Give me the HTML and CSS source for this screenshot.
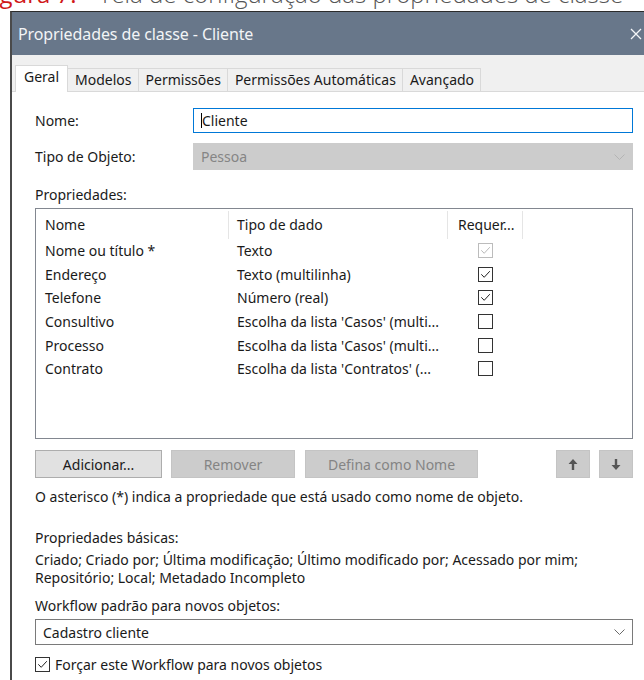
FILE: index.html
```html
<!DOCTYPE html>
<html lang="pt">
<head>
<meta charset="utf-8">
<title>Propriedades de classe - Cliente</title>
<link rel="stylesheet" href="styles.css">
</head>
<body>
<div class="caption"><div class="caption-line"><span class="fig">Figura 7:</span> <span class="cap-text">Tela de configuração das propriedades de classe</span></div></div>

<div class="dialog">
  <div class="titlebar">
    <span class="title">Propriedades de classe - Cliente</span>
    <svg class="close" width="12" height="12" viewBox="0 0 12 12"><path d="M1 1L11 11M11 1L1 11" stroke="#f4f6f8" stroke-width="1.3" fill="none"/></svg>
  </div>

  <div class="tabs">
    <div class="tab active">Geral</div>
    <div class="tab">Modelos</div>
    <div class="tab">Permissões</div>
    <div class="tab">Permissões Automáticas</div>
    <div class="tab">Avançado</div>
  </div>

  <div class="panel">
    <div class="field-row">
      <label class="label">Nome:</label>
      <div class="input focused"><span class="caret"></span>Cliente</div>
    </div>
    <div class="field-row">
      <label class="label">Tipo de Objeto:</label>
      <div class="select disabled">
        <span>Pessoa</span>
        <svg class="chev" width="11" height="6" viewBox="0 0 11 6"><path d="M0.5 0.5L5.5 5.5L10.5 0.5" stroke="#b4b4b4" fill="none"/></svg>
      </div>
    </div>

    <div class="section-label">Propriedades:</div>
    <div class="listbox">
      <div class="list-head">
        <div class="col c1">Nome</div>
        <div class="col c2">Tipo de dado</div>
        <div class="col c3">Requer...</div>
      </div>
      <div class="list-row">
        <div class="col c1">Nome ou título *</div>
        <div class="col c2">Texto</div>
        <div class="col c3"><span class="check checked dim"><svg viewBox="0 0 13 13"><path d="M2.3 6.3L5.2 9.3L10.8 3.2" stroke="#b9b9b9" stroke-width="1" fill="none"/></svg></span></div>
      </div>
      <div class="list-row">
        <div class="col c1">Endereço</div>
        <div class="col c2">Texto (multilinha)</div>
        <div class="col c3"><span class="check checked"><svg viewBox="0 0 13 13"><path d="M2.3 6.3L5.2 9.3L10.8 3.2" stroke="#222" stroke-width="1" fill="none"/></svg></span></div>
      </div>
      <div class="list-row">
        <div class="col c1">Telefone</div>
        <div class="col c2">Número (real)</div>
        <div class="col c3"><span class="check checked"><svg viewBox="0 0 13 13"><path d="M2.3 6.3L5.2 9.3L10.8 3.2" stroke="#222" stroke-width="1" fill="none"/></svg></span></div>
      </div>
      <div class="list-row">
        <div class="col c1">Consultivo</div>
        <div class="col c2">Escolha da lista 'Casos' (multi...</div>
        <div class="col c3"><span class="check"></span></div>
      </div>
      <div class="list-row">
        <div class="col c1">Processo</div>
        <div class="col c2">Escolha da lista 'Casos' (multi...</div>
        <div class="col c3"><span class="check"></span></div>
      </div>
      <div class="list-row">
        <div class="col c1">Contrato</div>
        <div class="col c2">Escolha da lista 'Contratos' (...</div>
        <div class="col c3"><span class="check"></span></div>
      </div>
    </div>

    <div class="button-row">
      <button class="btn b-add">Adicionar...</button>
      <button class="btn b-rem" disabled>Remover</button>
      <button class="btn b-name" disabled>Defina como Nome</button>
      <span class="spacer"></span>
      <button class="btn b-arrow" disabled><svg width="10" height="13" viewBox="0 0 10 13"><path d="M5 1L9.5 6H6.2V12H3.8V6H0.5Z" fill="#555"/></svg></button>
      <button class="btn b-arrow" disabled><svg width="10" height="13" viewBox="0 0 10 13"><path d="M5 12L9.5 7H6.2V1H3.8V7H0.5Z" fill="#555"/></svg></button>
    </div>

    <p class="note">O asterisco (*) indica a propriedade que está usado como nome de objeto.</p>

    <div class="basic-label">Propriedades básicas:</div>
    <p class="basic-list">Criado; Criado por; Última modificação; Último modificado por; Acessado por mim;<br>Repositório; Local; Metadado Incompleto</p>

    <div class="wf-label">Workflow padrão para novos objetos:</div>
    <div class="select wf">
      <span>Cadastro cliente</span>
      <svg class="chev" width="11" height="6" viewBox="0 0 11 6"><path d="M0.5 0.5L5.5 5.5L10.5 0.5" stroke="#6a6a6a" fill="none"/></svg>
    </div>

    <div class="force-row">
      <span class="check checked"><svg viewBox="0 0 13 13"><path d="M2.3 6.3L5.2 9.3L10.8 3.2" stroke="#222" stroke-width="1" fill="none"/></svg></span>
      <span>Forçar este Workflow para novos objetos</span>
    </div>
  </div>
</div>
</body>
</html>
```

FILE: styles.css
```css
html, body {
  margin: 0;
  padding: 0;
  background: #ffffff;
}

body {
  width: 644px;
  height: 680px;
  overflow: hidden;
  font-family: "Noto Sans", "Open Sans", sans-serif;
  font-size: 14px;
  color: #1a1a1a;
}

/* figure caption above the dialog; only its lower edge stays in view */
.caption {
  height: 11px;
  overflow: hidden;
}

.caption-line {
  margin-top: -18px;
  margin-left: -19px;
  white-space: nowrap;
  font-family: "Open Sans", sans-serif;
  font-weight: 300;
  font-size: 24px;
  line-height: 24px;
  color: #555;
}

.caption .fig {
  color: #d01818;
  font-weight: 400;
  margin-right: 16px;
}

.dialog {
  margin-left: 10px;
  width: 660px;
  height: 669px;
  border-left: 2px solid #4a4a4a;
  border-top: 1px solid #2b2b2b;
  background: #f0f0f0;
  display: flex;
  flex-direction: column;
}

.titlebar {
  height: 43px;
  flex: none;
  background: #68778a;
  display: flex;
  align-items: center;
  padding-left: 6px;
  box-sizing: border-box;
}

.title {
  color: #f2f4f6;
  font-size: 16px;
  letter-spacing: -0.1px;
}

.close {
  margin-left: 377px;
}

.tabs {
  height: 36px;
  flex: none;
  display: flex;
  align-items: flex-end;
  padding-left: 3px;
  background: #f0f0f0;
}

.tab {
  height: 22px;
  padding: 0 6px 0 7px;
  border: 1px solid #d9d9d9;
  border-bottom: none;
  border-left: none;
  background: #f0f0f0;
  line-height: 21px;
  font-size: 14px;
}

.tab.active {
  height: 26px;
  margin-bottom: -1px;
  padding: 0 8px;
  background: #ffffff;
  border-left: 1px solid #d9d9d9;
  position: relative;
  line-height: 22px;
}

.panel {
  flex: 1;
  background: #ffffff;
  border-top: 1px solid #d9d9d9;
  padding: 16px 0 0 23px;
}

.field-row {
  display: flex;
  align-items: center;
  width: 598px;
  margin-bottom: 10px;
}

.label {
  width: 158px;
}

.input, .select {
  flex: 1;
  height: 25px;
  box-sizing: border-box;
  display: flex;
  align-items: center;
  padding-left: 7px;
}

.input.focused {
  border: 1px solid #0078d7;
}

.caret {
  width: 1px;
  height: 15px;
  background: #000;
}

.select {
  justify-content: space-between;
  padding-right: 7px;
}

.select.disabled {
  height: 27px;
  background: #cccccc;
  border: 1px solid #cccccc;
  color: #858585;
}

.section-label {
  margin-top: 15px;
  height: 20px;
  line-height: 20px;
}

.listbox {
  width: 598px;
  height: 231px;
  box-sizing: border-box;
  border: 1px solid #828790;
  margin-top: 3px;
  padding-top: 2px;
}

.list-head, .list-row {
  display: flex;
}

.list-head {
  height: 28px;
  align-items: center;
}

.list-head .col {
  height: 28px;
  line-height: 27px;
  border-right: 1px solid #e5e5e5;
  box-sizing: border-box;
}

.list-row {
  height: 23.6px;
  align-items: center;
}

.col {
  white-space: nowrap;
  overflow: hidden;
}

.c1 { width: 193px; padding-left: 9px; box-sizing: border-box; }
.c2 { width: 219px; padding-left: 8px; box-sizing: border-box; }
.c3 { width: 75px; padding-left: 10px; box-sizing: border-box; }

.list-row .c3 {
  display: flex;
  justify-content: center;
  padding-left: 0;
}

.check {
  width: 15px;
  height: 15px;
  box-sizing: border-box;
  border: 1px solid #333333;
  background: #ffffff;
  display: inline-block;
  flex: none;
}

.check svg {
  display: block;
  width: 13px;
  height: 13px;
}

.check.dim {
  border-color: #bcbcbc;
}

.button-row {
  display: flex;
  width: 598px;
  margin-top: 11px;
  height: 28px;
}

.btn {
  height: 28px;
  box-sizing: border-box;
  font-family: inherit;
  font-size: 14px;
  padding: 0;
  margin: 0;
  border: 1px solid #adadad;
  background: #e1e1e1;
  color: #1a1a1a;
}

.btn[disabled] {
  background: #cccccc;
  border-color: #c4c4c4;
  color: #848484;
}

.b-add { width: 127px; }
.b-rem { width: 124px; margin-left: 9px; }
.b-name { width: 173px; margin-left: 10px; }
.spacer { flex: 1; }
.b-arrow {
  width: 34px;
  margin-left: 9px;
  display: flex;
  align-items: center;
  justify-content: center;
}

.note {
  margin: 9px 0 0;
  height: 20px;
  line-height: 20px;
}

.basic-label {
  margin-top: 21px;
  height: 20px;
  line-height: 20px;
}

.basic-list {
  margin: 3px 0 0;
  line-height: 18px;
}

.wf-label {
  margin-top: 9px;
  height: 20px;
  line-height: 20px;
}

.select.wf {
  width: 598px;
  flex: none;
  height: 26px;
  margin-top: 3px;
  border: 1px solid #7a7a7a;
  background: #ffffff;
}

.force-row {
  margin-top: 11px;
  display: flex;
  align-items: center;
  gap: 5px;
  height: 17px;
}
```
